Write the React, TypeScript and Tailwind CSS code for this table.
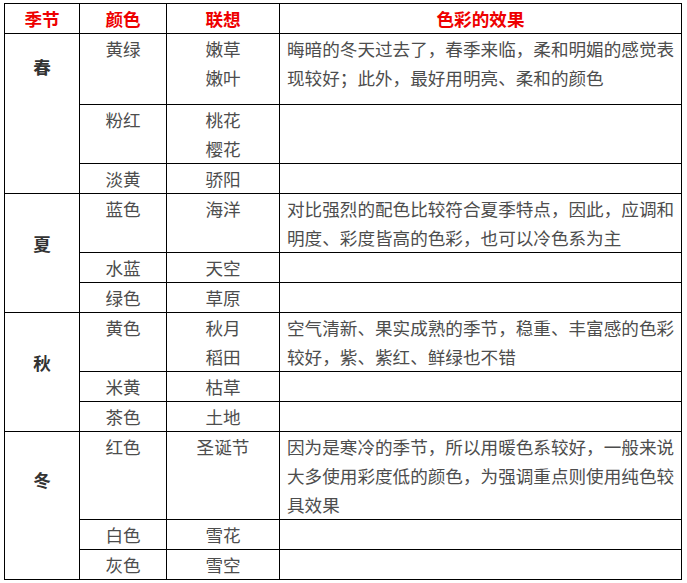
import React from "react";

type Row = { color: string; assoc: string[]; note?: string[]; tall?: boolean };
type Season = { name: string; pad: string; rows: Row[] };

const SEASONS: Season[] = [
  {
    name: "春",
    pad: "pt-[18px]",
    rows: [
      {
        color: "黄绿",
        assoc: ["嫩草", "嫩叶"],
        note: ["晦暗的冬天过去了，春季来临，柔和明媚的感觉表", "现较好；此外，最好用明亮、柔和的颜色"],
        tall: true,
      },
      { color: "粉红", assoc: ["桃花", "樱花"] },
      { color: "淡黄", assoc: ["骄阳"] },
    ],
  },
  {
    name: "夏",
    pad: "pt-[35px]",
    rows: [
      {
        color: "蓝色",
        assoc: ["海洋"],
        note: ["对比强烈的配色比较符合夏季特点，因此，应调和", "明度、彩度皆高的色彩，也可以冷色系为主"],
      },
      { color: "水蓝", assoc: ["天空"] },
      { color: "绿色", assoc: ["草原"] },
    ],
  },
  {
    name: "秋",
    pad: "pt-[35px]",
    rows: [
      {
        color: "黄色",
        assoc: ["秋月", "稻田"],
        note: ["空气清新、果实成熟的季节，稳重、丰富感的色彩", "较好，紫、紫红、鲜绿也不错"],
      },
      { color: "米黄", assoc: ["枯草"] },
      { color: "茶色", assoc: ["土地"] },
    ],
  },
  {
    name: "冬",
    pad: "pt-[33px]",
    rows: [
      {
        color: "红色",
        assoc: ["圣诞节"],
        note: [
          "因为是寒冷的季节，所以用暖色系较好，一般来说",
          "大多使用彩度低的颜色，为强调重点则使用纯色较",
          "具效果",
        ],
      },
      { color: "白色", assoc: ["雪花"] },
      { color: "灰色", assoc: ["雪空"] },
    ],
  },
];

const cell = "border border-black align-top p-0";

export default function App() {
  return (
    <div className="bg-white min-h-[583px] pt-[3px] pl-[4px] font-['Microsoft_YaHei','Noto_Sans_CJK_SC',sans-serif] text-[17.6px] leading-[29px] text-[#4d4d4d]">
      <table className="table-fixed border-collapse w-[678px]">
        <colgroup>
          <col className="w-[75px]" />
          <col className="w-[87px]" />
          <col className="w-[113px]" />
          <col className="w-[402px]" />
        </colgroup>
        <thead>
          <tr>
            {["季节", "颜色", "联想", "色彩的效果"].map((h) => (
              <th key={h} className={`${cell} text-center font-bold text-[#ee0000]`}>
                {h}
              </th>
            ))}
          </tr>
        </thead>
        <tbody>
          {SEASONS.map((season) =>
            season.rows.map((row, i) => (
              <tr key={season.name + row.color}>
                {i === 0 && (
                  <td
                    rowSpan={season.rows.length}
                    className={`${cell} ${season.pad} text-center font-bold text-[#333]`}
                  >
                    {season.name}
                  </td>
                )}
                <td className={`${cell} text-center ${row.tall ? "h-[71px]" : ""}`}>{row.color}</td>
                <td className={`${cell} text-center`}>
                  {row.assoc.map((a) => (
                    <div key={a}>{a}</div>
                  ))}
                </td>
                <td className={`${cell} pl-[7px] pr-[2px]`}>
                  {row.note?.map((line) => (
                    <div key={line} className="whitespace-nowrap">
                      {line}
                    </div>
                  ))}
                </td>
              </tr>
            ))
          )}
        </tbody>
      </table>
    </div>
  );
}
